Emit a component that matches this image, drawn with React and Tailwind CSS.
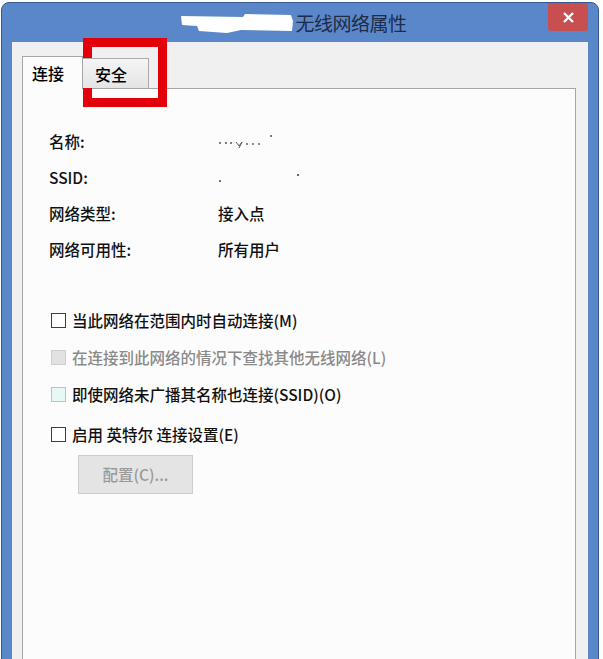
import React from 'react'

const font = { fontFamily: '"Noto Sans CJK SC", "Noto Sans", "Liberation Sans", sans-serif' }

const infoRows = [
  { label: '名称:', value: 'name' },
  { label: 'SSID:', value: 'ssid' },
  { label: '网络类型:', value: '接入点' },
  { label: '网络可用性:', value: '所有用户' },
]

// blurred / redacted values in the screenshot
const Smudge = ({ kind }) =>
  kind === 'name' ? (
    <svg width="60" height="16" viewBox="0 0 60 16">
      <g fill="#555">
        <circle cx="2" cy="9" r="1" />
        <circle cx="8" cy="9" r="1" />
        <circle cx="13" cy="9" r="1" />
        <path d="M18 8 L21 12 L24 8 L21 14" stroke="#555" strokeWidth="1" fill="none" />
        <circle cx="29" cy="10" r="0.9" />
        <circle cx="35" cy="10" r="0.9" />
        <circle cx="41" cy="10" r="0.9" />
        <circle cx="53" cy="2" r="1" />
      </g>
    </svg>
  ) : (
    <svg width="84" height="16" viewBox="0 0 84 16">
      <g fill="#444">
        <circle cx="2" cy="11" r="1" />
        <circle cx="80" cy="5" r="1.1" />
      </g>
    </svg>
  )

const Checkbox = ({ variant }) => {
  const styles = {
    normal: 'border-[#3e3e3e] bg-white',
    disabled: 'border-[#cfcfcf] bg-[#e2e2e2]',
    hover: 'border-[#9ccfd2] bg-[#eaf7f7]',
  }
  return <span className={`w-[15px] h-[15px] border-[1.5px] shrink-0 ${styles[variant]}`} />
}

const options = [
  { text: '当此网络在范围内时自动连接(M)', variant: 'normal', cls: 'h-[37px]' },
  { text: '在连接到此网络的情况下查找其他无线网络(L)', variant: 'disabled', cls: 'h-[37px] text-[#8a8a8a]' },
  { text: '即使网络未广播其名称也连接(SSID)(O)', variant: 'hover', cls: 'h-[37px]' },
  { text: '启用 英特尔 连接设置(E)', variant: 'normal', cls: 'h-[37px] mt-[3px]' },
]

export default function App() {
  return (
    <div className="relative w-[603px] h-[659px] bg-white overflow-hidden pt-[2px] pl-[1px]" style={font}>
      {/* window frame */}
      <div className="w-[598px] h-[700px] rounded-t-[8px] bg-[#5a87c9] border border-[#36588f] flex flex-col px-[10px]">
        {/* title bar */}
        <div className="relative h-[39px] shrink-0 flex items-center justify-center pr-[12px]">
          <svg width="114" height="22" viewBox="0 0 114 22" className="mt-[2px]">
            <path d="M0 3 L62 4 L64 1 L110 2 L112 8 L111 18 L60 17 L46 20 L18 18 L16 13 L1 12 Z" fill="#ffffff" />
          </svg>
          <span className="text-[19px] leading-none text-[#1f2b47] tracking-[-0.5px]">无线网络属性</span>
          <button className="absolute right-0 top-0 w-[40px] h-[28px] bg-[#c84f4f] rounded-b-[3px] flex items-center justify-center">
            <svg width="11" height="11" viewBox="0 0 11 11">
              <path d="M1 1 L10 10 M10 1 L1 10" stroke="#ffffff" strokeWidth="2.4" />
            </svg>
          </button>
        </div>

        {/* client area */}
        <div className="flex-1 bg-[#f0f0f0] pl-[10px] pr-[12px] pt-[14px] flex flex-col">
          {/* tabs */}
          <div className="flex items-end h-[33px] relative z-10">
            <div className="w-[61px] h-[33px] bg-[#fcfcfc] border border-b-0 border-[#a6a6a6] flex items-center pl-[9px] text-[16px] font-medium text-black">
              连接
            </div>
            <div className="w-[66px] h-[30px] mb-px bg-gradient-to-b from-[#f5f5f5] to-[#e4e4e4] border border-l-0 border-b-0 border-[#acacac] flex items-center pl-[12px] text-[16px] font-medium text-black">
              安全
            </div>
          </div>

          {/* tab panel */}
          <div className="flex-1 -mt-px bg-[#fcfcfc] border border-[#a6a6a6] pl-[26px] pt-[35px] text-[15.5px] font-medium text-[#111]">
            {infoRows.map((row) => (
              <div key={row.label} className="flex items-center h-[36px]">
                <span className="w-[169px]">{row.label}</span>
                {row.value === 'name' || row.value === 'ssid' ? (
                  <Smudge kind={row.value} />
                ) : (
                  <span>{row.value}</span>
                )}
              </div>
            ))}

            <div className="mt-[34px] ml-[2px]">
              {options.map((opt) => (
                <div key={opt.text} className={`flex items-center gap-[6px] ${opt.cls}`}>
                  <Checkbox variant={opt.variant} />
                  <span>{opt.text}</span>
                </div>
              ))}
              <button className="mt-[2px] ml-[27px] w-[115px] h-[39px] bg-[#e4e4e4] border border-[#cdcdcd] text-[15.5px] text-[#9a9a9a] flex items-center justify-center">
                配置(C)...
              </button>
            </div>
          </div>
        </div>
      </div>

      {/* red highlight annotation */}
      <div className="absolute left-[83px] top-[38px] w-[84px] h-[69px] border-[9px] border-[#e2000a]" />
    </div>
  )
}
